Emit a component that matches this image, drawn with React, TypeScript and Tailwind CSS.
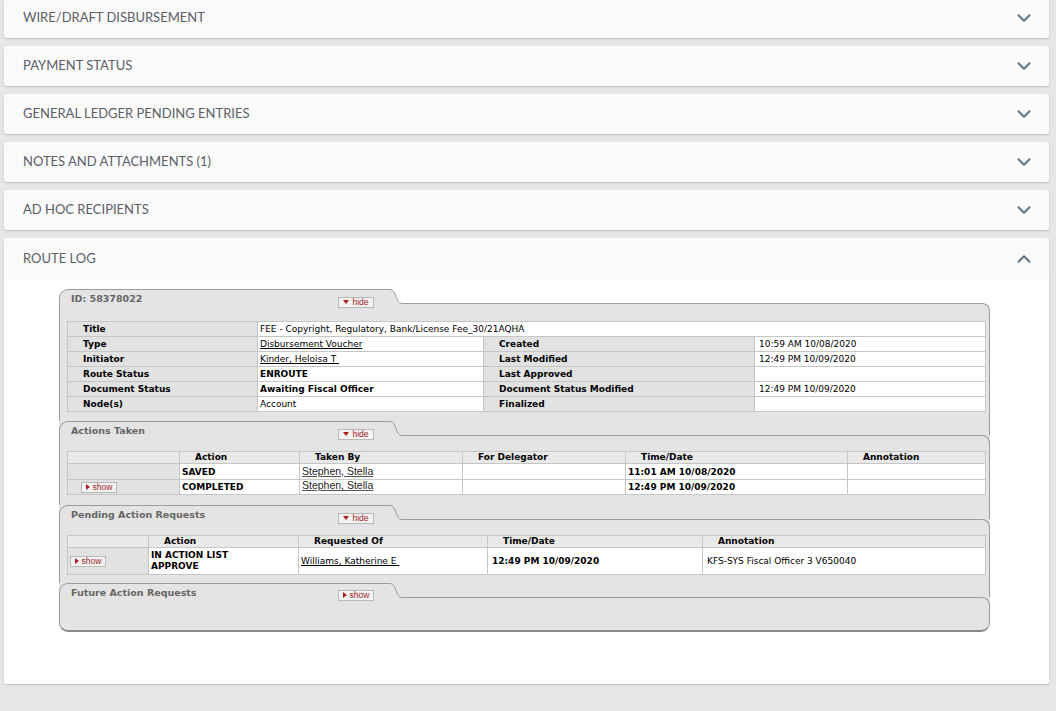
import { ChevronDown, ChevronUp } from "lucide-react";
import type { ReactNode } from "react";

const panels = [
  "WIRE/DRAFT DISBURSEMENT",
  "PAYMENT STATUS",
  "GENERAL LEDGER PENDING ENTRIES",
  "NOTES AND ATTACHMENTS (1)",
  "AD HOC RECIPIENTS",
];

const line = "border-[#9c9c9c]";
const cell = "border border-[#c6c6c6] p-0 align-middle";
const label = `${cell} bg-[#e2e2e2] font-bold pl-[15px]`;
const head = `${cell} bg-[#e9e9e9] font-bold pl-[15px] h-[12px] leading-[11px]`;
const value = `${cell} bg-white pl-[2px]`;

function Toggle({ open }: { open: boolean }) {
  return (
    <span className="inline-flex h-[11px] w-[36px] items-center justify-center gap-[3px] border border-[#b9b9b9] bg-[#f3f3f3] font-['Liberation_Sans',Arial,sans-serif] text-[8.5px] leading-none text-[#9c1d1d]">
      {open ? (
        <svg width="6" height="4" viewBox="0 0 6 4">
          <path d="M0 0h6L3 4z" fill="#b01e1e" />
        </svg>
      ) : (
        <svg width="4" height="6" viewBox="0 0 4 6">
          <path d="M0 0v6l4-3z" fill="#b01e1e" />
        </svg>
      )}
      {open ? "hide" : "show"}
    </span>
  );
}

function Section({
  title,
  open,
  first,
  last,
  body,
  children,
}: {
  title: string;
  open: boolean;
  first?: boolean;
  last?: boolean;
  body: string;
  children?: ReactNode;
}) {
  return (
    <div>
      <div className={`flex h-[22px] ${first ? "" : "bg-[#e4e4e4]"}`}>
        <div className={`flex h-full w-[331px] items-start rounded-tl-[9px] border-l border-t ${line} bg-[#e4e4e4]`}>
          <span className="w-[278px] pl-[11px] pt-[3px] text-[9.5px] font-bold leading-[12px] text-[#666]">
            {title}
          </span>
          <span className="mt-[5px]">
            <Toggle open={open} />
          </span>
        </div>
        <svg width="12" height="22" viewBox="0 0 12 22" className="shrink-0">
          <path d="M0 0.5C7 0.5 5 14.5 12 14.5V22H0Z" fill="#e4e4e4" />
          <path d="M0 0.5C7 0.5 5 14.5 12 14.5" fill="none" stroke="#9c9c9c" strokeWidth="1" />
        </svg>
        <div className={`flex h-full flex-1 flex-col ${first ? "" : "bg-[#e4e4e4]"}`}>
          <div className={`h-[14px] ${first ? "" : `border-r ${line}`}`} />
          <div className={`flex-1 rounded-tr-[9px] border-r border-t ${line} bg-[#e4e4e4]`} />
        </div>
      </div>
      <div
        className={`border-x ${line} bg-[#e4e4e4] pl-[7px] ${body} ${
          last ? "rounded-b-[9px] border-b-2 border-b-[#8a8a8a]" : ""
        }`}
      >
        {children}
      </div>
    </div>
  );
}

function Person({ name }: { name: string }) {
  return (
    <span className="font-['Liberation_Sans',Arial,sans-serif] text-[10.5px] leading-[11px] text-[#222] underline decoration-[#555]">
      {name}
    </span>
  );
}

export default function App() {
  return (
    <div className="min-h-[711px] bg-[#e6e6e6] pb-[27px] font-['DejaVu_Sans',Verdana,sans-serif]">
      <div className="mx-[4px] -mt-[2px] mr-[7px] flex flex-col gap-[8px]">
        {panels.map((p) => (
          <div
            key={p}
            className="flex h-[40px] items-center justify-between rounded-[2px] bg-[#fafafa] pl-[19px] pr-[14px] shadow-[0_1px_2px_rgba(0,0,0,0.18)]"
          >
            <span className="font-['Lato',sans-serif] text-[13px] text-[#5b6067]">{p}</span>
            <ChevronDown size={22} strokeWidth={2.1} className="text-[#5d6f80]" />
          </div>
        ))}

        <div className="rounded-[2px] bg-white shadow-[0_1px_2px_rgba(0,0,0,0.18)]">
          <div className="flex h-[41px] items-center justify-between bg-[#fafafa] pl-[19px] pr-[14px]">
            <span className="font-['Lato',sans-serif] text-[13px] text-[#5b6067]">ROUTE LOG</span>
            <ChevronUp size={22} strokeWidth={2.1} className="text-[#5d6f80]" />
          </div>

          <div className="pb-[52px] pl-[55px] pt-[10px]">
            <div className="w-[931px] text-[9px] leading-[12px] text-black">
              <Section title="ID: 58378022" open first body="pt-[10px] pb-[9px]">
                <table className="w-[918px] table-fixed border-collapse">
                  <colgroup>
                    <col className="w-[190px]" />
                    <col className="w-[226px]" />
                    <col className="w-[271px]" />
                    <col className="w-[231px]" />
                  </colgroup>
                  <tbody className="[&_td]:h-[15px]">
                    <tr>
                      <td className={label}>Title</td>
                      <td className={value} colSpan={3}>
                        FEE - Copyright, Regulatory, Bank/License Fee_30/21AQHA
                      </td>
                    </tr>
                    <tr>
                      <td className={label}>Type</td>
                      <td className={value}>
                        <span className="underline">Disbursement Voucher</span>
                      </td>
                      <td className={label}>Created</td>
                      <td className={`${value} pl-[4px]`}>10:59 AM 10/08/2020</td>
                    </tr>
                    <tr>
                      <td className={label}>Initiator</td>
                      <td className={value}>
                        <span className="whitespace-pre underline">Kinder, Heloisa T </span>
                      </td>
                      <td className={label}>Last Modified</td>
                      <td className={`${value} pl-[4px]`}>12:49 PM 10/09/2020</td>
                    </tr>
                    <tr>
                      <td className={label}>Route Status</td>
                      <td className={`${value} font-bold`}>ENROUTE</td>
                      <td className={label}>Last Approved</td>
                      <td className={value}></td>
                    </tr>
                    <tr>
                      <td className={label}>Document Status</td>
                      <td className={`${value} font-bold`}>Awaiting Fiscal Officer</td>
                      <td className={label}>Document Status Modified</td>
                      <td className={`${value} pl-[4px]`}>12:49 PM 10/09/2020</td>
                    </tr>
                    <tr>
                      <td className={label}>Node(s)</td>
                      <td className={value}>Account</td>
                      <td className={label}>Finalized</td>
                      <td className={value}></td>
                    </tr>
                  </tbody>
                </table>
              </Section>

              <Section title="Actions Taken" open body="pt-[8px] pb-[10px]">
                <table className="w-[918px] table-fixed border-collapse">
                  <colgroup>
                    <col className="w-[112px]" />
                    <col className="w-[120px]" />
                    <col className="w-[163px]" />
                    <col className="w-[163px]" />
                    <col className="w-[222px]" />
                    <col className="w-[138px]" />
                  </colgroup>
                  <tbody>
                    <tr>
                      <td className={head}></td>
                      <td className={`${head} pl-[13px]`}>Action</td>
                      <td className={head}>Taken By</td>
                      <td className={head}>For Delegator</td>
                      <td className={head}>Time/Date</td>
                      <td className={head}>Annotation</td>
                    </tr>
                    <tr className="[&_td]:h-[16px]">
                      <td className={`${cell} bg-[#e2e2e2]`}></td>
                      <td className={`${value} font-bold`}>SAVED</td>
                      <td className={value}>
                        <Person name="Stephen, Stella" />
                      </td>
                      <td className={value}></td>
                      <td className={`${value} font-bold`}>11:01 AM 10/08/2020</td>
                      <td className={value}></td>
                    </tr>
                    <tr className="[&_td]:h-[15px]">
                      <td className={`${cell} bg-[#e2e2e2] pl-[13px]`}>
                        <span className="flex">
                          <Toggle open={false} />
                        </span>
                      </td>
                      <td className={`${value} font-bold`}>COMPLETED</td>
                      <td className={`${value} align-top`}>
                        <Person name="Stephen, Stella" />
                      </td>
                      <td className={value}></td>
                      <td className={`${value} font-bold`}>12:49 PM 10/09/2020</td>
                      <td className={value}></td>
                    </tr>
                  </tbody>
                </table>
              </Section>

              <Section title="Pending Action Requests" open body="pt-[8px] pb-[8px]">
                <table className="w-[918px] table-fixed border-collapse">
                  <colgroup>
                    <col className="w-[81px]" />
                    <col className="w-[150px]" />
                    <col className="w-[189px]" />
                    <col className="w-[215px]" />
                    <col className="w-[283px]" />
                  </colgroup>
                  <tbody>
                    <tr>
                      <td className={head}></td>
                      <td className={head}>Action</td>
                      <td className={head}>Requested Of</td>
                      <td className={head}>Time/Date</td>
                      <td className={head}>Annotation</td>
                    </tr>
                    <tr className="[&_td]:h-[27px]">
                      <td className={`${cell} bg-[#e2e2e2] pl-[2px]`}>
                        <span className="flex">
                          <Toggle open={false} />
                        </span>
                      </td>
                      <td className={`${value} font-bold leading-[11px]`}>
                        IN ACTION LIST
                        <br />
                        APPROVE
                      </td>
                      <td className={value}>
                        <span className="whitespace-pre underline">Williams, Katherine E </span>
                      </td>
                      <td className={`${value} pl-[4px] font-bold`}>12:49 PM 10/09/2020</td>
                      <td className={`${value} pl-[4px]`}>KFS-SYS Fiscal Officer 3 V650040</td>
                    </tr>
                  </tbody>
                </table>
              </Section>

              <Section title="Future Action Requests" open={false} last body="h-[27px]" />
            </div>
          </div>
        </div>
      </div>
    </div>
  );
}
